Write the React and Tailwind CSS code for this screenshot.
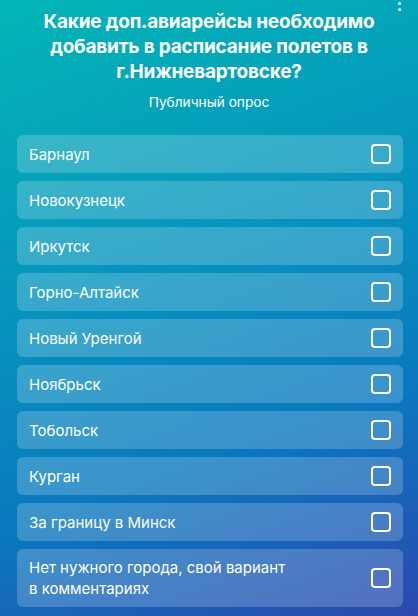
import React from 'react';

const options = [
  'Барнаул',
  'Новокузнецк',
  'Иркутск',
  'Горно-Алтайск',
  'Новый Уренгой',
  'Ноябрьск',
  'Тобольск',
  'Курган',
  'За границу в Минск',
  'Нет нужного города, свой вариант в комментариях',
];

const App = () => {
  return (
    <div
      className="relative w-[418px] h-[616px] overflow-hidden bg-[linear-gradient(160deg,#03b6b6_0%,#0790bf_45%,#0a78be_70%,#2c48b0_100%)] text-white"
      style={{ fontFamily: 'Inter, "Noto Sans", sans-serif' }}
    >
      <div className="absolute right-[17px] top-[2px] flex flex-col gap-[3px]">
        <span className="w-[3px] h-[3px] rounded-full bg-white"></span>
        <span className="w-[3px] h-[3px] rounded-full bg-white"></span>
      </div>

      <div className="pt-[9px] px-6 text-center">
        <h1 className="text-[19px] leading-[25px] font-bold tracking-[-0.2px]">
          Какие доп.авиарейсы необходимо добавить в расписание полетов в г.Нижневартовске?
        </h1>
        <p className="mt-[10px] text-[13.7px] leading-[16px]">Публичный опрос</p>
      </div>

      <div className="mt-[25px] pl-[17px] pr-[15px] flex flex-col gap-2">
        {options.map(opt => (
          <label
            key={opt}
            className="flex items-center justify-between min-h-[38px] pl-3 pr-3 py-[8px] rounded-md bg-white/20 cursor-pointer"
          >
            <span className="text-[15px] leading-[21px] max-w-[262px]">{opt}</span>
            <span className="w-5 h-5 shrink-0 rounded-[4px] border-2 border-white"></span>
          </label>
        ))}
      </div>
    </div>
  );
};

export default App;
